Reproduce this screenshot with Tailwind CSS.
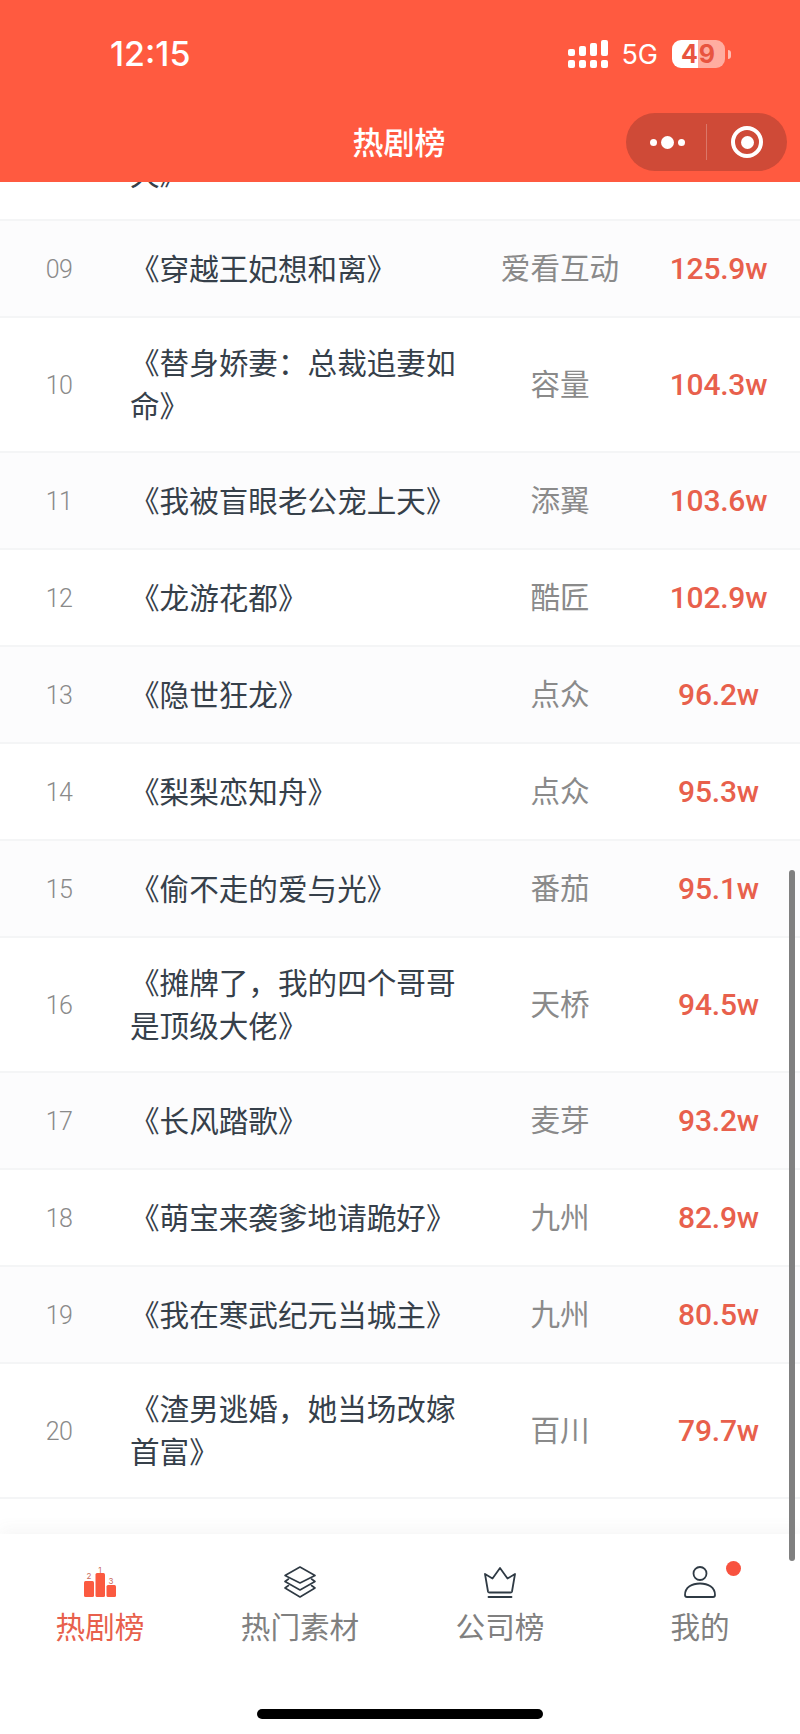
<!DOCTYPE html>
<html lang="zh-CN">
<head>
    <meta charset="UTF-8">
    <meta name="viewport" content="width=device-width, initial-scale=1.0">
    <title>热剧榜</title>
    <script src="https://cdn.jsdelivr.net/npm/@tailwindcss/browser@4"></script>
</head>
<body class="bg-white font-['Noto_Sans_CJK_SC',sans-serif]">
    <div class="relative w-[800px] h-[1734px] overflow-hidden flex flex-col">
        <!-- header -->
        <header class="relative z-10 h-[182px] shrink-0 bg-[#ff5a40] text-white pt-[10px]">
            <div class="h-[88px] flex items-center pl-[110px] pr-[69px]">
                <span class="text-[34px] font-medium leading-none font-['Inter',sans-serif]">12:15</span>
                <div class="ml-auto flex items-center">
                    <svg width="40" height="28" viewBox="0 0 40 28" fill="#fff">
                        <rect x="0" y="9" width="7" height="7" rx="2"/>
                        <rect x="11" y="6" width="7" height="10" rx="2"/>
                        <rect x="22" y="3" width="7" height="13" rx="2"/>
                        <rect x="33" y="0" width="7" height="16" rx="2"/>
                        <rect x="0" y="20" width="7" height="8" rx="2"/>
                        <rect x="11" y="20" width="7" height="8" rx="2"/>
                        <rect x="22" y="20" width="7" height="8" rx="2"/>
                        <rect x="33" y="20" width="7" height="8" rx="2"/>
                    </svg>
                    <span class="ml-[13px] text-[27px] leading-none font-['Inter',sans-serif]">5G</span>
                    <div class="ml-[14px] w-[53px] h-[28px] rounded-[9px] bg-[linear-gradient(90deg,#fff_49%,#ffffff80_49%)] flex items-center justify-center text-[#e8543f] text-[25px] font-bold leading-none tracking-[1px] font-['Inter',sans-serif]">49</div>
                    <div class="ml-[3px] w-[3px] h-[9px] rounded-r-full bg-white/60"></div>
                </div>
            </div>
            <div class="relative mt-[15px] h-[58px] flex items-center justify-center">
                <h1 class="text-[31px] font-medium leading-none -mt-[4px] -ml-[2px]">热剧榜</h1>
                <div class="absolute left-[626px] top-0 w-[161px] h-[58px] rounded-full bg-[#cf4a37] flex items-center">
                    <div class="w-[80px] flex items-center justify-center gap-[4px] pl-[3px]">
                        <span class="w-[7px] h-[7px] rounded-full bg-white"></span>
                        <span class="w-[13px] h-[13px] rounded-full bg-white"></span>
                        <span class="w-[7px] h-[7px] rounded-full bg-white"></span>
                    </div>
                    <div class="w-px h-[36px] bg-white/25"></div>
                    <div class="flex-1 flex items-center justify-center">
                        <div class="w-[32px] h-[32px] rounded-full border-[4px] border-white flex items-center justify-center">
                            <span class="w-[13px] h-[13px] rounded-full bg-white"></span>
                        </div>
                    </div>
                </div>
            </div>
        </header>

        <!-- ranking list, first row is scrolled under the header -->
        <main class="flex-1 overflow-hidden">
            <div id="rows" class="-mt-[96px]"></div>
        </main>

        <!-- tab bar -->
        <nav class="relative z-10 h-[200px] shrink-0 bg-white shadow-[0_-6px_14px_rgba(90,100,100,0.05)] grid grid-cols-4 pt-[32px]">
            <div class="flex flex-col items-center">
                <svg width="32" height="32" viewBox="0 0 32 32" fill="#fb5a40">
                    <rect x="0" y="15" width="10" height="16" rx="1.5"/>
                    <rect x="11.5" y="7" width="9.5" height="24" rx="1.5"/>
                    <rect x="22.5" y="19" width="9.5" height="12" rx="1.5"/>
                    <text x="5" y="13" font-size="8" text-anchor="middle" font-family="Inter" fill="#c96a5c">2</text>
                    <text x="16" y="6.5" font-size="8" text-anchor="middle" font-family="Inter" fill="#c96a5c">1</text>
                    <text x="27" y="17.5" font-size="8" text-anchor="middle" font-family="Inter" fill="#c96a5c">3</text>
                </svg>
                <span class="mt-[8px] text-[29.6px] leading-[40px] text-[#e8604c]">热剧榜</span>
            </div>
            <div class="flex flex-col items-center">
                <svg width="32" height="32" viewBox="0 0 32 32" fill="none" stroke="#2f3a44" stroke-width="1.6" stroke-linejoin="round" stroke-linecap="round">
                    <path d="M16 1 31 9.5 16 17 1 9.5Z"/>
                    <path d="M4.5 13 1 15.5 16 24 31 15.5 27.5 13"/>
                    <path d="M4.5 19.5 1 22 16 31 31 22 27.5 19.5"/>
                </svg>
                <span class="mt-[8px] text-[29.6px] leading-[40px] text-[#808080]">热门素材</span>
            </div>
            <div class="flex flex-col items-center">
                <svg width="32" height="32" viewBox="0 0 32 32" fill="none" stroke="#2f3a44" stroke-width="1.8" stroke-linejoin="round" stroke-linecap="round">
                    <path d="M1 8 8.5 12.5 16 2 23.5 12.5 31 8 28 25.5Q27.8 26.5 26.5 26.5H5.5Q4.2 26.5 4 25.5Z"/>
                    <path d="M4.5 31H27.5"/>
                </svg>
                <span class="mt-[8px] text-[29.6px] leading-[40px] text-[#808080]">公司榜</span>
            </div>
            <div class="relative flex flex-col items-center">
                <svg width="32" height="32" viewBox="0 0 32 32" fill="none" stroke="#2f3a44" stroke-width="1.8" stroke-linejoin="round">
                    <circle cx="16" cy="7.5" r="6.5"/>
                    <path d="M1 29C1 21 8 17.5 16 17.5S31 21 31 29Q31 31 29 31H3Q1 31 1 29Z"/>
                </svg>
                <span class="mt-[8px] text-[29.6px] leading-[40px] text-[#808080]">我的</span>
                <span class="absolute left-[126px] top-[-5px] w-[15px] h-[15px] rounded-full bg-[#f8523f]"></span>
            </div>
        </nav>

        <!-- scrollbar and home indicator lie over everything -->
        <div class="absolute z-20 left-[789px] top-[870px] w-[6px] h-[691px] rounded-full bg-[#808080]"></div>
        <div class="absolute z-20 left-[257px] top-[1709px] w-[286px] h-[10px] rounded-full bg-black"></div>
    </div>

    <script>
        const dramas = [
            ["08", "&nbsp;<br>天》", "", "", false],
            ["09", "《穿越王妃想和离》", "爱看互动", "125.9w", true],
            ["10", "《替身娇妻：总裁追妻如命》", "容量", "104.3w", false],
            ["11", "《我被盲眼老公宠上天》", "添翼", "103.6w", true],
            ["12", "《龙游花都》", "酷匠", "102.9w", false],
            ["13", "《隐世狂龙》", "点众", "96.2w", true],
            ["14", "《梨梨恋知舟》", "点众", "95.3w", false],
            ["15", "《偷不走的爱与光》", "番茄", "95.1w", true],
            ["16", "《摊牌了，我的四个哥哥是顶级大佬》", "天桥", "94.5w", false],
            ["17", "《长风踏歌》", "麦芽", "93.2w", true],
            ["18", "《萌宝来袭爹地请跪好》", "九州", "82.9w", false],
            ["19", "《我在寒武纪元当城主》", "九州", "80.5w", true],
            ["20", "《渣男逃婚，她当场改嫁首富》", "百川", "79.7w", false]
        ];

        document.getElementById("rows").innerHTML = dramas.map(([no, title, company, heat, shaded], i) => `
            <div class="flex items-center pb-[3px] border-b-2 border-[#f4f5f6] ${i === 0 || title.length > 11 ? "h-[135px]" : "h-[97px]"} ${shaded ? "bg-[#fcfcfd]" : "bg-white"}">
                <div class="w-[118px] pt-[5px] text-center text-[25px] font-light tracking-[-0.5px] text-[#8a8a8a] font-['Roboto',sans-serif]">${i === 0 ? "" : no}</div>
                <div class="ml-[12px] w-[336px] text-[29.6px] leading-[43px] text-[#36404a]">${title}</div>
                <div class="w-[188px] text-center text-[29.6px] text-[#8a8a8a]">${company}</div>
                <div class="w-[129px] pt-[2px] text-center text-[30px] font-medium tracking-[-0.2px] text-[#e8604c] font-['Roboto',sans-serif]">${heat}</div>
            </div>
        `).join("");
    </script>
</body>
</html>
